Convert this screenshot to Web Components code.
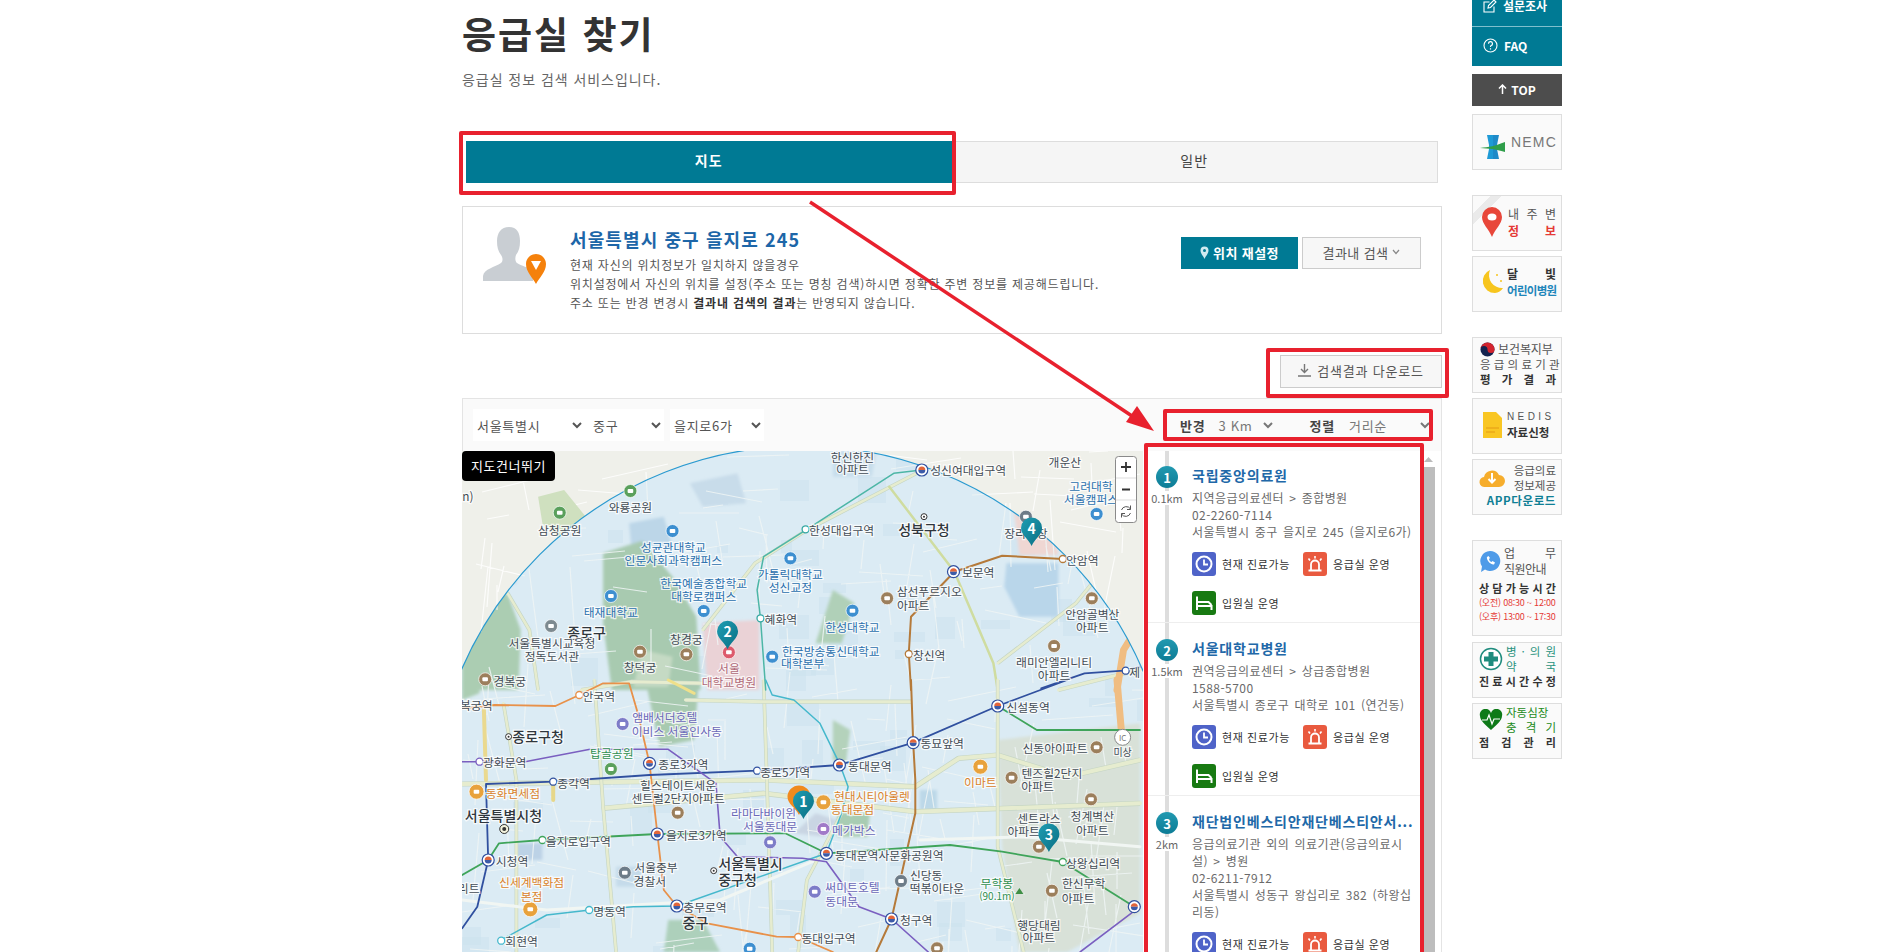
<!DOCTYPE html>
<html lang="ko"><head><meta charset="utf-8"><title>응급실 찾기</title>
<style>
html,body{margin:0;padding:0;height:952px;overflow:hidden;background:#fff}
body{font-family:"Noto Sans CJK KR","Noto Sans",sans-serif;color:#333}
</style></head>
<body><page-root></page-root>
<script>
const def=(n,css,html,extra)=>{customElements.define(n,class extends HTMLElement{
  constructor(){super();this.attachShadow({mode:'open'}).innerHTML='<style>'+css+'</style>'+(typeof html==='function'?html(this):html);}
  connectedCallback(){extra&&extra(this)}
})};

/* ---------- heading ---------- */
def('page-head',`:host{display:block;padding-top:10px}
h1{margin:0;font-size:37px;line-height:46px;font-weight:700;color:#333;letter-spacing:2px}
p{margin:13px 0 0;font-size:14px;line-height:20px;color:#666;letter-spacing:.95px}`,
`<h1>응급실 찾기</h1><p>응급실 정보 검색 서비스입니다.</p>`);

/* ---------- tabs ---------- */
def('tab-bar',`:host{display:flex;margin:52px 4px 0 4px;height:42px}
div{flex:1;display:flex;align-items:center;justify-content:center;font-size:14px;box-sizing:border-box;padding-bottom:4px;letter-spacing:1px}
.on{background:#007a94;color:#fff;font-weight:700}
.off{background:#f5f5f5;color:#444;border:1px solid #ddd;border-left:0}`,
`<div class="on">지도</div><div class="off">일반</div>`);

/* ---------- location card ---------- */
def('location-card',`:host{display:flex;box-sizing:border-box;height:128px;margin-top:23px;border:1px solid #ddd;padding:19px 20px 0 20px;position:relative}
.av{width:64px;flex:none;margin-right:23px}
.tx{flex:1}
h2{margin:0 0 3px;font-size:18px;line-height:26px;font-weight:700;color:#1d66a8;letter-spacing:1.1px}
p{margin:0;font-size:12px;line-height:19px;color:#555;letter-spacing:.8px;white-space:nowrap}
b{color:#333}
.btns{display:flex;gap:4px;margin-top:11px;height:32px}
.b1,.b2{display:flex;align-items:center;justify-content:center;box-sizing:border-box;font-size:13px;gap:4px;letter-spacing:.4px;padding-bottom:2px}
.b1{width:117px;background:#007a94;color:#fff;font-weight:700}
.b2{width:119px;background:#f7f7f7;color:#555;border:1px solid #ccc}`,
`<div class="av"><svg width="64" height="62" viewBox="0 0 64 62">
<path d="M0 54V49C1 42 12 40 18 36 20 34 20 31 18 28 15 24 14 20 14 14 14 6 18 0 26 0 34 0 37 6 37 14 37 20 36 24 33 28 32 31 32 34 34 36 38 39 46 40 50 44V54Z" fill="#c9ced3" transform="translate(0,1)"/>
<path d="M53 58C50 52 43 46 43 38 43 32 48 28 53 28 58 28 63 32 63 38 63 46 56 52 53 58Z" fill="#f5810c"/>
<path d="M48 35H58L53 44Z" fill="#fff"/></svg></div>
<div class="tx"><h2>서울특별시 중구 을지로 245</h2>
<p>현재 자신의 위치정보가 일치하지 않을경우</p>
<p>위치설정에서 자신의 위치를 설정(주소 또는 명칭 검색)하시면 정확한 주변 정보를 제공해드립니다.</p>
<p>주소 또는 반경 변경시 <b>결과내 검색의 결과</b>는 반영되지 않습니다.</p></div>
<div class="btns"><div class="b1"><svg width="9" height="13" viewBox="0 0 9 13"><path d="M4.500 13C3 9.500 .5 7.500 .5 4.500A4 4 0 0 1 8.500 4.500C8.500 7.500 6 9.500 4.500 13Z" fill="#cfeaf0"/><circle cx="4.500" cy="4.500" r="1.500" fill="#007a94"/></svg>위치 재설정</div>
<div class="b2">결과내 검색 <svg width="8" height="6" viewBox="0 0 8 6"><path d="M1 1L4 4.500 7 1" fill="none" stroke="#888" stroke-width="1.200"/></svg></div></div>`);

/* ---------- download ---------- */
def('download-row',`:host{display:flex;justify-content:flex-end;margin-top:21px}
div{width:162px;height:33px;box-sizing:border-box;border:1px solid #ccc;background:#f7f7f7;display:flex;align-items:center;justify-content:center;gap:6px;font-size:13px;color:#555;letter-spacing:.8px;padding-bottom:2px}`,
`<div><svg width="13" height="13" viewBox="0 0 13 13"><path d="M6.500 0V8M3 5L6.500 8.500 10 5M0 12H13" fill="none" stroke="#777" stroke-width="1.400"/></svg>검색결과 다운로드</div>`);

/* ---------- map ---------- */
const zA=(x,y)=>[460+x/2.306,390+y/3], zB=(x,y)=>[460+x/2.306,680+y/3];
const poly=(f,pts)=>pts.map(p=>f(p[0],p[1]).map(n=>n.toFixed(1)).join(',')).join(' ');
const C={k:'#30363c',g:'#434c55',b:'#2b70ad',p:'#6a68b8',o:'#d9822b',n:'#2f8f4f',r:'#b06a78'};
const LA=[
[905,198,'한신한진','g'],[905,235,'아파트','g'],[1172,238,'성신여대입구역','g'],[1395,215,'개운산','g'],[1455,285,'고려대학','b'],[1455,325,'서울캠퍼스','b'],
[393,350,'와룡공원','g'],[230,418,'삼청공원','g'],[880,418,'한성대입구역','g'],[1070,418,'성북구청','k',14],[1305,426,'장리시장','g'],
[492,468,'성균관대학교','b'],[492,508,'인문사회과학캠퍼스','b'],[762,550,'가톨릭대학교','b'],[762,590,'성신교정','b'],[1435,507,'안암역','g'],[1195,545,'보문역','g'],
[562,578,'한국예술종합학교','b'],[562,617,'대학로캠퍼스','b'],[1082,602,'삼선푸르지오','g'],[1045,643,'아파트','g'],[348,665,'태재대학교','b'],[740,685,'혜화역','g'],[905,708,'한성대학교','b'],
[1458,670,'안암골벽산','g'],[1458,710,'아파트','g'],[292,727,'종로구','k',14],[212,757,'서울특별시교육청','g'],[212,795,'정독도서관','g'],[522,745,'창경궁','g'],[415,828,'창덕궁','g'],
[855,780,'한국방송통신대학교','b'],[790,818,'대학본부','b'],[1082,793,'창신역','g'],[1370,815,'래미안엘리니티','g'],[1370,852,'아파트','g'],[1556,845,'제','g'],[115,870,'경복궁','g'],
[620,833,'서울','r'],[620,875,'대학교병원','r'],[18,315,'n)','g']];
const LB=[
[320,45,'안국역','g'],[25,72,'경복궁역','g'],[472,108,'앰배서더호텔','p'],[500,150,'이비스 서울인사동','p'],[180,168,'종로구청','k',14],[1310,78,'신설동역','g'],[1528,213,'미상','g',10],
[1372,202,'신동아이파트','g'],[1112,188,'동묘앞역','g'],[350,218,'탑골공원','n'],[103,245,'광화문역','g'],[515,250,'종로3가역','g'],[945,255,'동대문역','g'],[750,274,'종로5가역','g'],
[1200,305,'이마트','o'],[1365,278,'텐즈힐2단지','g'],[1332,315,'아파트','g'],[262,308,'종각역','g'],[122,338,'동화면세점','o'],[503,313,'힐스테이트세운','g'],[503,352,'센트럴2단지아파트','g'],
[950,345,'현대시티아울렛','o'],[905,385,'동대문점','o'],[700,398,'라마다바이윈','p'],[715,437,'서울동대문','p'],[100,405,'서울특별시청','k',14],[908,447,'메가박스','p'],
[1335,412,'센트라스','g'],[1300,450,'아파트','g'],[1458,407,'청계벽산','g'],[1458,447,'아파트','g'],[273,480,'을지로입구역','g'],[545,462,'을지로3가역','g'],[990,522,'동대문역사문화공원역','g'],
[120,541,'시청역','g'],[670,550,'서울특별시','k',14],[640,597,'중구청','k',14],[1460,546,'상왕십리역','g'],[452,560,'서울중부','g'],[438,600,'경찰서','g'],[1075,583,'신당동','g'],[1100,622,'떡볶이타운','g'],
[165,604,'신세계백화점','o'],[165,645,'본점','o'],[905,620,'써미트호텔','p'],[880,660,'동대문','p'],[1238,608,'무학봉','n'],[1238,647,'(90.1m)','n',10],[1438,608,'한신무학','g'],[1425,652,'아파트','g'],
[345,692,'명동역','g'],[565,678,'충무로역','g'],[1052,717,'청구역','g'],[543,727,'중구','k',14],[1335,733,'행당대림','g'],[1335,770,'아파트','g'],[850,771,'동대입구역','g'],[142,780,'회현역','g'],[20,622,'리트','g']];
const labels=(L,f)=>L.map(([x,y,t,c,s])=>{const p=f(x,y);return `<text x="${p[0].toFixed(1)}" y="${p[1].toFixed(1)}" fill="${C[c]}" font-size="${s||11.8}" font-weight="${s==14?500:400}">${t}</text>`}).join('');
const roadCol='#f1f6f3', main='#e6eccf';
const line=(f,pts,col,w)=>{const a=`<polyline fill="none" stroke="${col}" stroke-width="${w}" stroke-linejoin="round" stroke-linecap="round" points="${poly(f,pts)}"/>`;
  return col===main?`<polyline fill="none" stroke="#c5d5c4" stroke-width="${w+1.2}" stroke-linejoin="round" points="${poly(f,pts)}"/>`+a:a};
const area=(f,pts,col)=>`<polygon fill="${col}" points="${poly(f,pts)}"/>`;
const dot=(f,x,y,col,r)=>{const p=f(x,y);return `<circle cx="${p[0].toFixed(1)}" cy="${p[1].toFixed(1)}" r="${r||3.500}" fill="#fff" stroke="${col}" stroke-width="1.300"/>`};
const poi=(f,x,y,col,r)=>{const p=f(x,y),R=r||6.500,X=p[0].toFixed(1),Y=p[1].toFixed(1);return `<circle cx="${X}" cy="${Y}" r="${R}" fill="${col}" stroke="#fff" stroke-opacity=".7" stroke-width="1"/><rect x="${p[0]-2.800}" y="${p[1]-2}" width="5.600" height="4" rx="1" fill="#fff"/>`};
const trans=(f,x,y)=>{const p=f(x,y);return `<circle cx="${p[0].toFixed(1)}" cy="${p[1].toFixed(1)}" r="6" fill="#fff" stroke="#2f4f9f" stroke-width="1.200"/><path d="M${p[0]-3.500} ${p[1]}a3.500 3.500 0 0 1 7 0z" fill="#e2663a"/><path d="M${p[0]-3.500} ${p[1]}a3.500 3.500 0 0 0 7 0z" fill="#3c5ba8"/>`};
const pin=(f,x,y,n)=>{const p=f(x,y),X=p[0],Y=p[1];return `<path d="M${X} ${Y}C${X-3} ${Y-7} ${X-10.500} ${Y-11} ${X-10.500} ${Y-18}A10.500 10.500 0 1 1 ${X+10.500} ${Y-18}C${X+10.500} ${Y-11} ${X+3} ${Y-7} ${X} ${Y}Z" fill="url(#pg)"/><text x="${X}" y="${Y-18}" fill="#fff" font-size="14" font-weight="700">${n}</text>`};
/* seeded street mesh */
let seed=7;const rnd=()=>(seed=(seed*16807)%2147483647)/2147483647;
let mesh='';for(let i=0;i<260;i++){const x=462+rnd()*681,y=451+rnd()*501,a=rnd()<.5?rnd()*.5-.25:1.3+rnd()*.5,l=18+rnd()*55;
  mesh+=`M${x.toFixed(0)} ${y.toFixed(0)}L${(x+Math.cos(a)*l).toFixed(0)} ${(y+Math.sin(a)*l).toFixed(0)}`;}
let blocks='';seed=91;for(let i=0;i<70;i++){const x=462+rnd()*681,y=451+rnd()*501,w=10+rnd()*22,h=8+rnd()*20;blocks+=`<rect x="${x.toFixed(0)}" y="${y.toFixed(0)}" width="${w.toFixed(0)}" height="${h.toFixed(0)}" fill="#cde2ef" opacity=".6"/>`;}
const mapSvg=`<svg width="681" height="501" viewBox="462 451 681 501" xmlns="http://www.w3.org/2000/svg" font-family="Noto Sans CJK KR,sans-serif" text-anchor="middle" dominant-baseline="central">
<defs><linearGradient id="pg" x1="0" y1="0" x2="1" y2="1"><stop offset="0" stop-color="#1f9db2"/><stop offset="1" stop-color="#0a6f84"/></linearGradient>
<clipPath id="cc"><circle cx="802" cy="817" r="371"/></clipPath><filter id="bl" x="-5%" y="-5%" width="110%" height="110%"><feGaussianBlur stdDeviation="1.800"/></filter></defs>
<rect x="462" y="451" width="681" height="501" fill="#eff0ea"/>
<path d="${mesh}" stroke="#fff" stroke-width="1.200" opacity=".8" fill="none"/>
${area(zA,[[180,320],[240,300],[290,380],[240,460],[190,400]],'#cfe0bf')}
<g clip-path="url(#cc)"><rect x="462" y="451" width="681" height="501" fill="#dbebf4"/>
${blocks}
<g filter="url(#bl)">
${area(zA,[[5,470],[110,445],[130,580],[5,600]],'#bcd6e8')}
${area(zA,[[390,400],[470,380],[490,470],[395,470]],'#bcd6e8')}
${area(zA,[[530,280],[640,250],[660,340],[560,350]],'#c8dcea')}
${area(zA,[[1260,520],[1380,520],[1380,680],[1290,680],[1255,590]],'#b9d6ea')}
${area(zA,[[1275,340],[1330,290],[1370,420],[1380,495],[1290,495]],'#efd7d3')}
${area(zA,[[1340,183],[1440,183],[1430,250],[1340,240]],'#d2e2ca')}
${area(zA,[[860,183],[960,183],[950,260],[860,260]],'#c8deec')}
${area(zA,[[330,490],[420,452],[490,560],[545,680],[555,900],[350,900],[330,700]],'#a8cab0')}
${area(zB,[[430,15],[550,15],[540,180],[460,200]],'#a8cab0')}
${area(zA,[[5,620],[110,612],[140,720],[135,900],[5,900]],'#abcdb2')}
${area(zB,[[5,0],[45,0],[45,40],[5,60]],'#abcdb2')}
${area(zA,[[560,700],[690,690],[690,900],[570,900]],'#ead2d6')}
${area(zA,[[860,600],[910,640],[880,760],[820,760]],'#b0d0b8')}
${area(zA,[[420,780],[490,800],[480,890],[400,890]],'#c5dac4')}
${area(zB,[[480,720],[560,720],[600,816],[470,816]],'#add0bb')}
${area(zB,[[860,120],[900,150],[890,250],[860,240]],'#b4d2bb')}
${area(zB,[[870,395],[945,400],[940,470],[870,470]],'#a8ccb2')}
${area(zB,[[1240,180],[1568,130],[1568,700],[1400,816],[1290,816],[1250,500]],'#d8e1d8')}
${area(zB,[[1060,330],[1100,330],[1100,390],[1060,390]],'#bcd8e8')}
${area(zB,[[360,560],[420,560],[420,620],[360,620]],'#c5dbea')}
${area(zB,[[820,400],[870,420],[840,470],[770,460]],'#c9d5e3')}
${area(zB,[[130,490],[190,490],[190,540],[130,540]],'#bcd2e6')}
</g>
<path d="${mesh}" stroke="#eef5f4" stroke-width="1.200" opacity=".85" fill="none"/>
${line(zA,[[180,900],[160,720],[110,610],[5,605]],main,2.500)}
${line(zA,[[560,720],[680,520],[800,420],[1060,245],[1120,183]],main,2.500)}
${line(zA,[[990,290],[1140,545],[1230,820],[1240,900]],'#cfdca0',2.500)}
${line(zA,[[1240,820],[1420,640],[1520,480],[1568,420]],main,2.500)}
${line(zA,[[1568,840],[1500,860],[1380,900]],main,3)}
${line(zA,[[1568,495],[1440,505]],main,3)}
${line(zB,[[5,312],[700,300],[1050,320],[1150,235],[1240,225],[1400,290],[1568,240]],main,4)}
${line(zB,[[330,385],[700,340],[1050,395],[1568,370]],main,4)}
${line(zB,[[700,0],[710,400],[720,816]],main,2.500)}
${line(zB,[[1240,0],[1240,500],[1300,816]],main,2.500)}
${line(zB,[[310,0],[330,380],[360,816]],main,2.500)}
${line(zB,[[100,70],[130,300],[130,816]],main,2.500)}
${line(zB,[[5,660],[200,690],[600,660],[840,530]],roadCol,3)}
${line(zB,[[520,60],[700,65],[1040,65]],main,3)}
${line(zB,[[880,400],[800,600],[780,816]],main,2.500)}
${line(zB,[[1060,480],[1300,470],[1568,500]],roadCol,3)}
${line(zA,[[280,900],[395,875],[560,880]],main,3)}
${line(zB,[[215,300],[215,360]],'#e6d78a',4)}
${line(zA,[[1568,700],[1530,780],[1515,900]],'#f0bd82',7)}
${line(zB,[[1515,0],[1525,150]],'#f0bd82',7)}
${line(zB,[[55,90],[60,300]],'#ead98f',4)}
${line(zB,[[480,0],[540,40]],'#efe08a',3)}
${line(zA,[[1065,240],[1000,250],[800,418],[700,500],[685,600],[693,685],[705,900]],'#4db6a6',1.500)}
${line(zB,[[705,0],[720,45],[770,60],[830,130],[875,250],[895,320],[880,400],[845,520],[500,678],[400,680],[300,690],[200,705],[95,780]],'#45b8cc',1.500)}
${line(zA,[[1390,507],[1250,497],[1140,545],[1040,680],[1035,790],[1040,900]],'#b57a3a',2)}
${line(zB,[[1040,0],[1045,188],[1050,300],[1050,400],[995,717],[960,816]],'#b57a3a',2)}
${line(zB,[[5,85],[80,75],[220,78],[275,45],[330,10],[390,10],[410,100],[437,250],[455,460],[470,630],[500,678],[570,730],[730,770],[780,771],[860,816]],'#e8914a',1.800)}
${line(zA,[[1568,830],[1530,842],[1440,850],[1340,895]],'#30509f',1.800)}
${line(zB,[[1400,0],[1240,78],[1045,188],[875,255],[685,272],[437,285],[215,305],[60,312],[65,540],[40,680],[5,745]],'#30509f',1.800)}
${line(zB,[[5,585],[65,540],[90,490],[190,480],[455,462],[750,460],[845,520],[1130,495],[1250,515],[1390,546],[1555,680]],'#3fa45a',1.800)}
${line(zB,[[1240,78],[1330,150],[1568,150]],'#3fa45a',1.800)}
${line(zB,[[5,245],[45,245],[150,245],[300,208],[480,208],[590,310],[600,470],[640,530],[790,535],[845,545],[920,680],[995,717],[1080,816]],'#7a5fc0',1.600)}
${line(zB,[[1568,680],[1430,816]],'#7a5fc0',1.600)}
</g>
<circle cx="802" cy="817" r="371" fill="none" stroke="#2a9ad0" stroke-width="1.200"/>
${trans(zA,1065,240)}${trans(zA,1138,545)}${trans(zB,1240,78)}${trans(zB,1045,188)}${trans(zB,875,255)}${trans(zB,437,250)}${trans(zB,455,462)}${trans(zB,845,520)}${trans(zB,65,540)}${trans(zB,500,678)}${trans(zB,995,717)}${trans(zB,1555,680)}
${dot(zA,797,418,'#33a6a0')}${dot(zA,693,685,'#33a6a0')}${dot(zA,1390,507,'#b57a3a')}${dot(zA,1035,792,'#b57a3a')}${dot(zA,1535,842,'#30509f')}${dot(zB,275,45,'#e8914a')}${dot(zB,45,245,'#7a5fc0')}${dot(zB,215,305,'#30509f')}${dot(zB,685,272,'#30509f')}${dot(zB,190,480,'#3fa45a')}${dot(zB,1390,546,'#3fa45a')}${dot(zB,298,690,'#45b8cc')}${dot(zB,95,782,'#45b8cc')}${dot(zB,780,771,'#e8914a')}
${[[393,303,'#5aa05c'],[230,368,'#5aa05c']].map(a=>poi(zA,a[0],a[1],a[2])).join('')}
${[[490,423],[762,505],[1468,372],[348,618],[562,663],[905,662],[720,800]].map(a=>poi(zA,a[0],a[1],'#3d8fd0')).join('')}
${[[985,625],[1457,625],[1370,768],[415,785],[522,793],[58,868]].map(a=>poi(zA,a[0],a[1],'#9c7f5c')).join('')}
${poi(zA,210,708,'#7d8a90')}${poi(zA,1305,380,'#6d7c88')}${poi(zA,620,787,'#dd5a6c')}
${[[375,132],[715,487],[818,635]].map(a=>poi(zB,a[0],a[1],'#7d7cc8')).join('')}
${[[838,367],[1200,260],[38,335],[162,688]].map(a=>poi(zB,a[0],a[1],'#e8a23c',7.500)).join('')}
${[[502,398],[1272,293],[1468,202],[1455,358],[1335,500],[1365,632],[1100,805]].map(a=>poi(zB,a[0],a[1],'#9c7f5c')).join('')}
${poi(zB,348,267,'#5aa05c')}${poi(zB,838,447,'#a07ac8')}${poi(zB,380,578,'#6d7c88')}${poi(zB,1017,603,'#6d7c88')}${poi(zB,668,806,'#3d8fd0')}
<g stroke="#fff" stroke-width="2.500" paint-order="stroke" stroke-opacity=".75">${labels(LA,zA)}${labels(LB,zB)}</g>
${(p=>`<circle cx="${p[0]}" cy="${p[1]}" r="4.500" fill="#f3f3dd" stroke="#333"/><circle cx="${p[0]}" cy="${p[1]}" r="2" fill="#333"/>`)(zB(102,447))}
${(p=>`<circle cx="${p[0]}" cy="${p[1]}" r="3" fill="#fff" stroke="#333"/><circle cx="${p[0]+0}" cy="${p[1]}" r="1" fill="#333"/>`)(zB(112,170))}
${(p=>`<circle cx="${p[0]}" cy="${p[1]}" r="3" fill="#fff" stroke="#333"/><circle cx="${p[0]+0}" cy="${p[1]}" r="1" fill="#333"/>`)(zA(1070,380))}
${(p=>`<circle cx="${p[0]}" cy="${p[1]}" r="3" fill="#fff" stroke="#333"/><circle cx="${p[0]+0}" cy="${p[1]}" r="1" fill="#333"/>`)(zB(585,572))}
${(p=>`<circle cx="${p[0]}" cy="${p[1]}" r="8" fill="#fff" stroke="#8a8a8a"/><text x="${p[0]}" y="${p[1]}" font-size="8" fill="#777">IC</text>`)(zB(1528,172))}
<path d="M${zB(1290,636)[0]} ${zB(1290,636)[1]-4}l4 6h-8z" fill="#3f8f45"/>
${(X=>{const x=799,y=815;return `<path d="M${x} ${y}C${x-3} ${y-7} ${x-11.500} ${y-11} ${x-11.500} ${y-18}A11.500 11.500 0 1 1 ${x+11.500} ${y-18}C${x+11.500} ${y-11} ${x+3} ${y-7} ${x} ${y}Z" fill="#f08a1d"/>`})()}
${pin(zA,617,778,2)}${pin(zA,1318,468,4)}${pin(zB,792,417,1)}${pin(zB,1358,516,3)}
<rect x="1115.500" y="456.500" width="21" height="66" rx="3" fill="#fff" stroke="#8a8a8a"/><path d="M1116 478H1136M1116 500H1136" stroke="#ddd"/>
<path d="M1121 467H1131M1126 462V472M1122 489.500H1130" stroke="#333" stroke-width="1.800" fill="none"/>
<path d="M1130.500 509A5 5 0 0 0 1121.500 510M1121.500 514A5 5 0 0 0 1130.500 513M1130.500 505.500V509.500H1127M1121.500 517.500V513.500H1125" fill="none" stroke="#555" stroke-width="1"/>
</svg>`;
def('hospital-map',`:host{display:block;position:relative;width:681px;height:501px;overflow:hidden}
svg{display:block}
a{position:absolute;left:0;top:0;width:93px;height:30px;background:#000;color:#fff;border-radius:4px;font-size:13px;letter-spacing:.5px;padding-bottom:2px;box-sizing:border-box;display:flex;align-items:center;justify-content:center;text-decoration:none}`,
mapSvg+`<a href="#list">지도건너뛰기</a>`);

/* ---------- list ---------- */
const clock=`<svg width="24" height="24" viewBox="0 0 24 24"><circle cx="12" cy="12" r="7.500" fill="none" stroke="#fff" stroke-width="2"/><path d="M12 7.500V12.500H16" fill="none" stroke="#fff" stroke-width="1.800"/></svg>`;
const siren=`<svg width="24" height="24" viewBox="0 0 24 24"><path d="M8 18V12.500A4 4 0 0 1 16 12.500V18M5.500 18.500H18.500" fill="none" stroke="#fff" stroke-width="1.800"/><path d="M12 4V6.500M5.500 6.500L7 8.500M18.500 6.500L17 8.500" stroke="#fff" stroke-width="1.600"/></svg>`;
const bed=`<svg width="24" height="24" viewBox="0 0 24 24"><path d="M5 5.500V19M5 15H19.500V19M5 11H16.500L19.500 14" fill="none" stroke="#fff" stroke-width="2"/></svg>`;
def('status-tag',`:host{display:inline-flex;align-items:center;gap:6px;font-size:11px;color:#333;height:24px;letter-spacing:.6px;white-space:nowrap}
i{display:flex;width:24px;height:24px;border-radius:3px}
:host([k=clock]) i{background:#4f63c8}:host([k=siren]) i{background:#e95a3f}:host([k=bed]) i{background:#187a12}`,
el=>`<i>${{clock,siren,bed}[el.getAttribute('k')]}</i><slot></slot>`);
def('hospital-item',`:host{display:flex;box-sizing:border-box;padding:0 3px 0 0;border-bottom:1px solid #eee}
.tl{width:38px;flex:none;margin-right:6px;display:flex;flex-direction:column;align-items:center;background:linear-gradient(#ddd,#ddd) center/4px 100% no-repeat}
.n{width:22px;height:22px;margin-top:16px;border-radius:50%;background:linear-gradient(#2199b0,#0d7c96);color:#fff;font-weight:700;font-size:13px;display:flex;align-items:center;justify-content:center}
.d{background:#fff;font-size:11px;line-height:14px;color:#666;margin-top:3px;padding:0 1px;width:100%;text-align:center}
.b{flex:1;min-width:0;padding:15px 0 7px}
h3{margin:0 0 4px;font-size:14px;line-height:20px;font-weight:700;color:#2168a8;white-space:nowrap;overflow:hidden;letter-spacing:.8px}
p{margin:0;font-size:12px;line-height:17px;color:#6a6a6a;letter-spacing:.45px;word-spacing:1.500px;max-width:224px}
.t{display:flex;flex-wrap:wrap;margin-top:12px;row-gap:15px}
::slotted(status-tag){width:111px}`,
el=>`<div class="tl"><div class="n">${el.getAttribute('n')}</div><div class="d">${el.getAttribute('d')}</div></div>
<div class="b"><h3>${el.getAttribute('name')}</h3><p>${el.getAttribute('kind')}</p><p>${el.getAttribute('tel')}</p><p>${el.getAttribute('addr')}</p><div class="t"><slot></slot></div></div>`);
const tags=`<status-tag k="clock">현재 진료가능</status-tag><status-tag k="siren">응급실 운영</status-tag><status-tag k="bed">입원실 운영</status-tag>`;
def('hospital-list',`:host{display:flex;width:297px;height:501px;overflow:hidden}
.c{width:277px;padding-left:5px;box-sizing:border-box;margin-top:-1px}
.s{width:13px;margin-left:2px;margin-top:0;display:flex;flex-direction:column;align-items:center}
.s svg{margin:6px 0 5px}
.s div{flex:1;width:13px;background:#bdbdbd}`,
`<div class="c">
<hospital-item n="1" d="0.1km" name="국립중앙의료원" kind="지역응급의료센터 &gt; 종합병원" tel="02-2260-7114" addr="서울특별시 중구 을지로 245 (을지로6가)">${tags}</hospital-item>
<hospital-item n="2" d="1.5km" name="서울대학교병원" kind="권역응급의료센터 &gt; 상급종합병원" tel="1588-5700" addr="서울특별시 종로구 대학로 101 (연건동)">${tags}</hospital-item>
<hospital-item n="3" d="2km" name="재단법인베스티안재단베스티안서..." kind="응급의료기관 외의 의료기관(응급의료시설) &gt; 병원" tel="02-6211-7912" addr="서울특별시 성동구 왕십리로 382 (하왕십리동)">${tags}</hospital-item>
</div><div class="s"><svg width="9" height="5" viewBox="0 0 9 5"><path d="M0 5L4.500 0 9 5Z" fill="#bbb"/></svg><div></div></div>`);

/* ---------- panel ---------- */
def('map-panel',`:host{display:block;margin-top:10px;border-top:1px solid #e4e4e4;border-right:1px solid #e4e4e4;border-left:1px solid #e4e4e4;box-sizing:border-box;background:#fafafa}
.bar{display:flex;height:52px;align-items:center;padding-left:10px;box-sizing:border-box}
select{font:inherit;font-size:13px;color:#555;border:0;background:#fff;height:32px;letter-spacing:.7px;outline:0}
.l{display:flex}.r{display:flex;align-items:center;margin-left:auto;margin-right:8px;font-size:13px;font-weight:700;color:#444;letter-spacing:.8px}
.r select{background:transparent;height:26px;font-size:13px;font-weight:400;color:#777}
.body{display:flex;background:#fff;margin-left:-1px}`,
`<div class="bar"><div class="l">
<select style="width:112px"><option>서울특별시</option></select>
<select style="width:79px;padding-left:4px"><option>중구</option></select>
<select style="width:94px;margin-left:6px"><option>을지로6가</option></select></div>
<div class="r"><span>반경</span><select style="width:62px;margin-left:9px"><option>3 Km</option></select><span style="margin-left:33px">정렬</span><select style="width:88px;margin-left:10px"><option>거리순</option></select></div></div>
<div class="body"><hospital-map></hospital-map><hospital-list id="list"></hospital-list></div>`);

/* ---------- side rail ---------- */
def('side-banner',`:host{display:block;box-sizing:border-box;width:90px;border:1px solid #dedede;background:#fafafa;padding:4px 6px;overflow:hidden}
.w{display:flex;align-items:center;gap:3px}.w>div{flex:1;min-width:0}`,
`<div class="w"><slot name="icon"></slot><div><slot></slot></div></div><slot name="foot"></slot>`);
def('side-rail',`:host{display:flex;flex-direction:column;width:90px;margin-left:30px;margin-top:-13px;flex:none}
.tb{display:flex;align-items:center;gap:6px;background:#007a94;color:#fff;font-size:12px;font-weight:700;box-sizing:border-box;padding:0 0 2px 11px}
.tb svg{flex:none}
.top{height:32px;margin-top:8px;background:#4d4d4d;gap:4px;justify-content:center;padding-left:0}
side-banner{height:56px;margin-top:5px;font-size:11px;line-height:15px;color:#555}
.g{margin-top:25px}
.j{text-align-last:justify;white-space:nowrap}
.l{display:block;line-height:14px}
b{font-weight:700}
.red{color:#e53935}.sky{color:#1e86ba}.teal{color:#0f7f95}.k{color:#333}.grn{color:#1a8a20}.tg{color:#2a9380}`,
`<div class="tb" style="height:40px;border-bottom:1px solid #7fbfcd"><svg width="14" height="14" viewBox="0 0 14 14"><path d="M11 7.500V13H1V3H6.500M5 9L5.500 6.500 11 1 13 3 7.500 8.500Z" fill="none" stroke="#fff" stroke-width="1.100"/></svg>설문조사</div>
<div class="tb" style="height:39px"><svg width="15" height="15" viewBox="0 0 15 15"><circle cx="7.500" cy="7.500" r="6.500" fill="none" stroke="#fff" stroke-width="1.100"/><path d="M5.500 5.800A2 2 0 1 1 8 7.600C7.500 8 7.500 8.300 7.500 9M7.500 10.300V11.500" fill="none" stroke="#fff" stroke-width="1.200"/></svg>FAQ</div>
<div class="tb top"><svg width="9" height="10" viewBox="0 0 9 10"><path d="M4.500 10V1M1 4.500L4.500 1 8 4.500" fill="none" stroke="#fff" stroke-width="1.500"/></svg>TOP</div>
<side-banner style="margin-top:8px;padding:0 5px;display:flex;align-items:center;font-size:14px;letter-spacing:1.200px;color:#777;font-family:'Liberation Sans',sans-serif"><svg slot="icon" width="30" height="30" viewBox="0 0 28 30" style="margin-top:10px"><path d="M14 3H20L18 13V17L20 27H14Z" fill="#1e8ac8"/><path d="M14 3H8L10 13V17L8 27H14Z" fill="#1e9ad6"/><path d="M1 16C10 15 16 14 26 10V20C16 17 10 16.500 1 16Z" fill="#2f9e4a"/></svg>NEMC</side-banner>
<side-banner class="g" style="background:linear-gradient(135deg,#fafafa 12%,#eaeaea 12%,#eaeaea 20%,#fafafa 20%) #fafafa;padding:9px 5px 0 8px"><svg slot="icon" width="22" height="32" viewBox="0 0 22 32"><path d="M11 31C8 23 1 18 1 11A10 10 0 0 1 21 11C21 18 14 23 11 31Z" fill="#e8473a"/><ellipse cx="11" cy="11" rx="4.500" ry="3.500" fill="#fff"/></svg><span class="l j" style="font-size:12px;line-height:17px;margin-left:2px">내 주 변</span><b class="l j red" style="font-size:12px;line-height:17px;margin-left:2px">정 보</b></side-banner>
<side-banner style="padding:8px 5px 0 7px"><svg slot="icon" width="24" height="28" viewBox="0 0 24 28"><path d="M15 25A12 12 0 0 1 10 2 13 13 0 0 0 23 20 11 11 0 0 1 15 25Z" fill="#f7c51e"/><circle cx="17" cy="7" r="1" fill="#f7c51e"/><circle cx="21" cy="13" r="1" fill="#f7c51e"/></svg><b class="l j k" style="font-size:12px;line-height:17px">달 빛</b><b class="l sky" style="font-size:11.500px;line-height:17px;letter-spacing:-.7px;white-space:nowrap">어린이병원</b></side-banner>
<side-banner class="g" style="padding:3px 5px 0 7px"><svg slot="icon" width="15" height="15" viewBox="0 0 15 15"><circle cx="7.500" cy="7.500" r="7" fill="#14234f"/><path d="M.5 7.500A7 7 0 0 1 14.500 7.500 3.500 3.500 0 0 1 7.500 7.500 3.500 3.500 0 0 0 .5 7.500Z" fill="#d3242e"/></svg><span class="l" style="font-size:12px;line-height:16px;letter-spacing:-.1px;white-space:nowrap">보건복지부</span><span slot="foot" class="l j" style="font-size:11.500px;line-height:15px">응 급 의 료 기 관</span><b slot="foot" class="l j k" style="font-size:11.500px;line-height:15px">평 가 결 과</b></side-banner>
<side-banner style="padding:10px 5px 0 7px"><svg slot="icon" width="24" height="28" viewBox="0 0 24 28"><path d="M3 1H16L22 7V27H3Z" fill="#f9c623"/><path d="M6 17H19M6 21H15" stroke="#e49a14"/></svg><span class="l" style="font-size:10px;letter-spacing:3.400px;line-height:15px;font-family:'Liberation Sans',sans-serif">NEDIS</span><b class="l k" style="font-size:11.500px;line-height:16px;white-space:nowrap">자료신청</b></side-banner>
<side-banner style="padding:3px 5px 0 6px"><svg slot="icon" width="26" height="22" viewBox="0 0 26 22"><path d="M6 20A5 5 0 0 1 5 10 8 8 0 0 1 20 8 6 6 0 0 1 20 20Z" fill="#f6ad2c"/><path d="M13 6V15M9.500 12L13 15.500 16.500 12" fill="none" stroke="#fff" stroke-width="2"/></svg><span class="l" style="font-size:11.500px;line-height:15px;white-space:nowrap;text-align:right">응급의료</span><span class="l" style="font-size:11.500px;line-height:15px;white-space:nowrap;text-align:right">정보제공</span><b slot="foot" class="l teal" style="font-size:11.500px;line-height:15px;text-align:right;white-space:nowrap;letter-spacing:.6px">APP다운로드</b></side-banner>
<side-banner class="g" style="height:96px;padding:4px 5px 0 6px"><svg slot="icon" width="22" height="24" viewBox="0 0 22 24"><path d="M11 2A10 10 0 1 1 6 20.500L2 23 3 17.500A10 10 0 0 1 11 2Z" fill="#4f9be8"/><path d="M8 8C7 10 11 16 15 15.500L16 13.500 13.500 12 12.500 13C11 12.500 10 11 10 10L11 9 9.500 7Z" fill="#fff"/></svg><span class="l j" style="font-size:12px;line-height:16px">업 무</span><span class="l" style="font-size:12px;line-height:16px;white-space:nowrap;letter-spacing:-.5px">직원안내</span>
<b slot="foot" class="l j k" style="font-size:11px;line-height:16px;margin-top:3px">상 담 가 능 시 간</b><span slot="foot" class="l red" style="font-size:9px;line-height:14px;letter-spacing:-.2px;white-space:nowrap">(오전) 08:30 ~ 12:00</span><span slot="foot" class="l red" style="font-size:9px;line-height:14px;letter-spacing:-.2px;white-space:nowrap">(오후) 13:00 ~ 17:30</span></side-banner>
<side-banner style="margin-top:6px;padding:1px 5px 0 6px"><svg slot="icon" width="24" height="24" viewBox="0 0 24 24"><circle cx="12" cy="12" r="10.500" fill="#fff" stroke="#1f8c7e" stroke-width="1.500"/><path d="M9.500 5H14.500V9.500H19V14.500H14.500V19H9.500V14.500H5V9.500H9.500Z" fill="#1f8c7e"/></svg><span class="l j tg" style="font-size:11.500px;line-height:15px">병 · 의 원</span><span class="l j tg" style="font-size:11.500px;line-height:15px">약 국</span><b slot="foot" class="l j k" style="font-size:11px;line-height:15px">진 료 시 간 수 정</b></side-banner>
<side-banner style="padding:1px 5px 0 6px"><svg slot="icon" width="24" height="22" viewBox="0 0 24 22"><path d="M12 21C7 16 1 12 1 7A5.500 5.500 0 0 1 12 4 5.500 5.500 0 0 1 23 7C23 12 17 16 12 21Z" fill="#0e7a18"/><path d="M3 11H8L10 6 13 15 15 10H21" fill="none" stroke="#fff" stroke-width="1.200"/></svg><span class="l j grn" style="font-size:11.500px;line-height:15px;white-space:nowrap">자동심장</span><span class="l j grn" style="font-size:11.500px;line-height:15px">충 격 기</span><b slot="foot" class="l j k" style="font-size:11px;line-height:15px">점 검 관 리</b></side-banner>`);

/* ---------- annotations ---------- */
def('red-marks',`:host{position:absolute;inset:0;pointer-events:none}
div{position:absolute;box-sizing:border-box;border:4px solid #e8212e;border-radius:2px}
svg{position:absolute;left:0;top:0}`,
`<div style="left:459px;top:131px;width:497px;height:64px"></div>
<div style="left:1266px;top:348px;width:183px;height:50px"></div>
<div style="left:1163px;top:409px;width:270px;height:32px"></div>
<div style="left:1144px;top:443px;width:280px;height:520px"></div>
<svg width="1896" height="952"><path d="M810 202L1135 418" stroke="#e8212e" stroke-width="3.500" fill="none"/><path d="M1154 431L1126 422 1137 406Z" fill="#e8212e"/></svg>`);

/* ---------- root ---------- */
def('page-root',`:host{display:block;position:relative;width:1896px;height:952px;overflow:hidden}
.wrap{display:flex;padding-left:462px;align-items:flex-start}
main{width:980px;flex:none}`,
`<div class="wrap"><main><page-head></page-head><tab-bar></tab-bar><location-card></location-card><download-row></download-row><map-panel></map-panel></main><side-rail></side-rail></div><red-marks></red-marks>`);
</script>
</body></html>
